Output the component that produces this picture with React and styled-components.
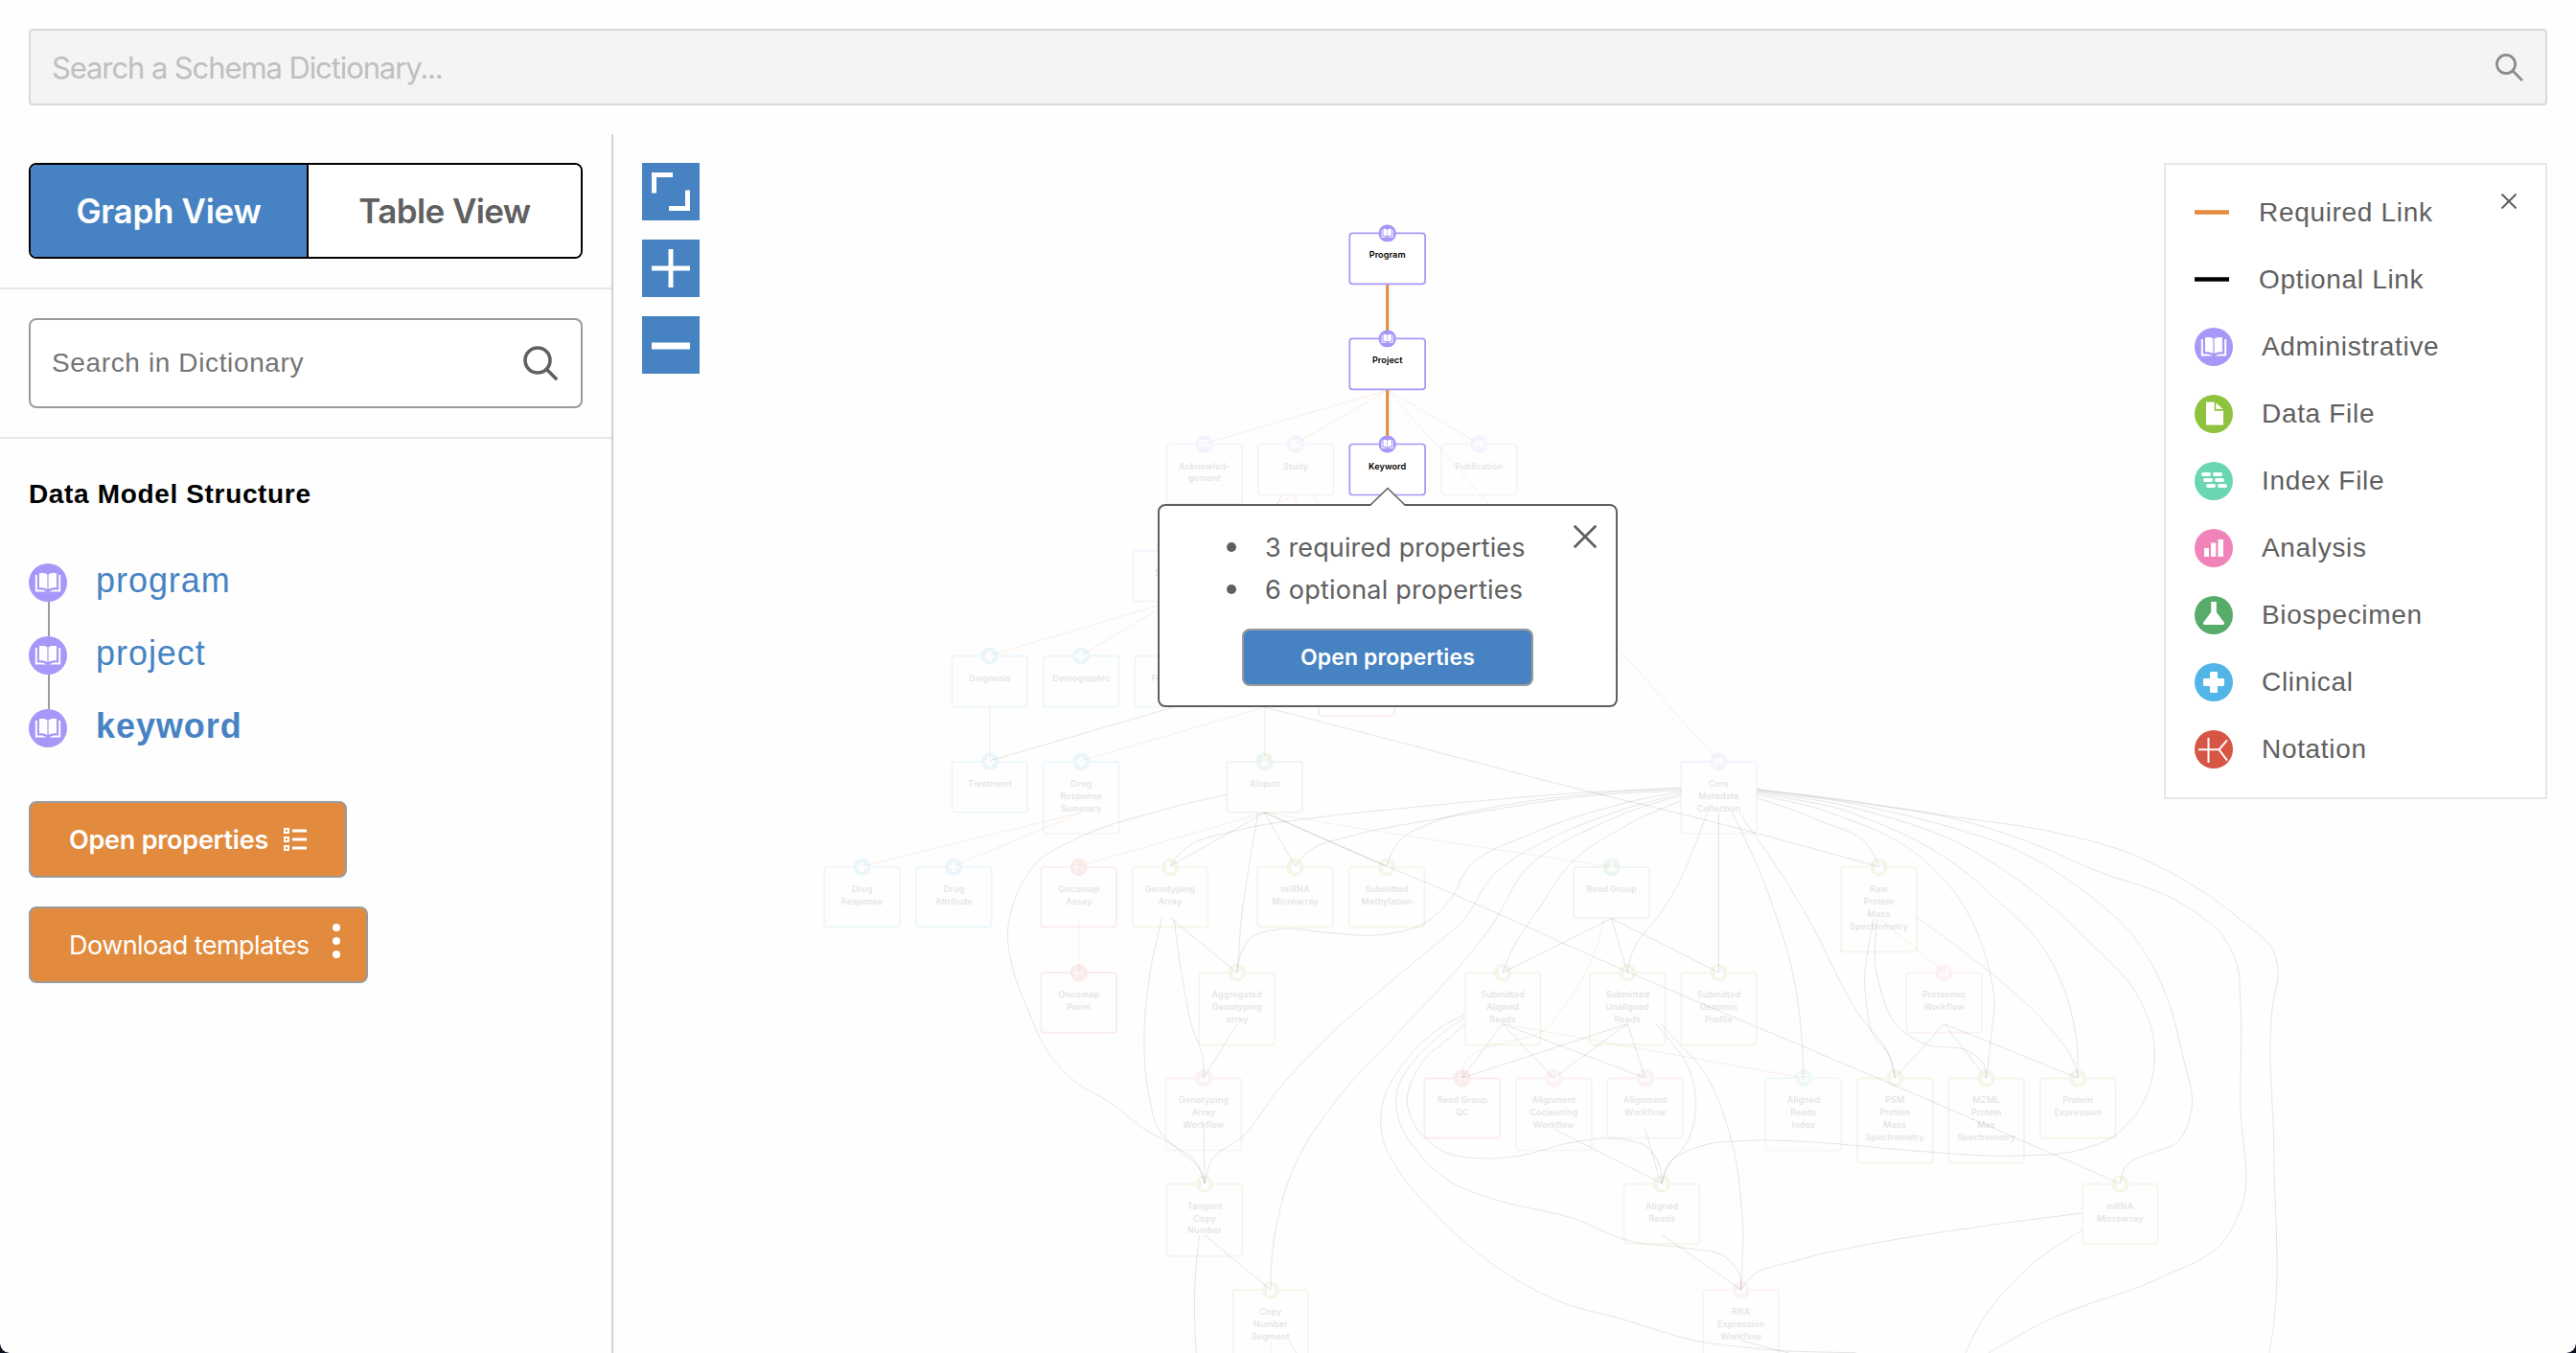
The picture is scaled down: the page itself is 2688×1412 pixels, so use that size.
import React from 'react';
import styled, { createGlobalStyle } from 'styled-components';

const sans = `Inter, Roboto, sans-serif`;
const helv = `"Liberation Sans", Arial, sans-serif`;

const Global = createGlobalStyle`
  *{box-sizing:border-box;}
  html,body{margin:0;padding:0;background:#fff;}
  body{width:2688px;height:1412px;overflow:hidden;}
  button{font:inherit;cursor:pointer;}
`;

const Page = styled.div`
  position:relative;display:flex;flex-direction:column;width:2688px;height:1412px;overflow:hidden;background:#fefefe;
`;
const TopBar = styled.header`padding:30px;height:140px;`;
const SchemaSearch = styled.div`
  display:flex;align-items:center;justify-content:space-between;height:80px;padding:0 23px 0 22px;
  border:2px solid #d9d9d9;border-radius:4px;background:#f4f4f4;
`;
const Hint = styled.span`
  font-family:${(p) => p.$font};font-size:${(p) => p.$size}px;letter-spacing:${(p) => p.$track}px;color:${(p) => p.$color};white-space:nowrap;
`;
const Main = styled.div`display:flex;height:1272px;`;
const Side = styled.aside`width:640px;border-right:2px solid #d1d1d1;`;
const Section = styled.section`
  padding:30px;border-bottom:2px solid #e7e7e7;height:${(p) => p.$h}px;
`;
const Toggle = styled.div`
  display:flex;width:578px;height:100px;border:2px solid #000;border-radius:8px;overflow:hidden;
`;
const ToggleItem = styled.button`
  width:${(p) => (p.$active ? 290 : 284)}px;border:0;border-right:${(p) => (p.$active ? '2px solid #000' : '0')};padding:0;
  background:${(p) => (p.$active ? '#4783c3' : '#fff')};color:${(p) => (p.$active ? '#fff' : '#606060')};
  font-family:${sans};font-weight:600;font-size:35px;letter-spacing:${(p) => p.$track}px;
`;
const DictSearch = styled.div`
  display:flex;align-items:center;justify-content:space-between;width:578px;height:94px;
  padding:0 24px 0 22px;border:2px solid #9b9b9b;border-radius:8px;background:#fff;
`;
const Structure = styled.div`padding:42px 30px 0;`;
const Heading = styled.h3`margin:0;height:32px;line-height:32px;font-family:${helv};font-weight:700;font-size:28px;letter-spacing:0.65px;color:#000;`;
const Steps = styled.ul`list-style:none;margin:56px 0 0;padding:0;display:flex;flex-direction:column;`;
const Step = styled.li`display:flex;height:76px;&:last-child{height:40px;}`;
const Rail = styled.div`width:40px;display:flex;flex-direction:column;align-items:center;`;
const Joint = styled.div`width:2px;height:36px;margin-left:2px;background:#9b9b9b;`;
const StepName = styled.span`
  margin-left:30px;height:40px;line-height:40px;margin-top:-2px;font-family:${helv};font-size:36px;color:#4783c3;
  font-weight:${(p) => (p.$current ? 700 : 400)};letter-spacing:${(p) => p.$track}px;
`;
const Actions = styled.div`display:flex;flex-direction:column;align-items:flex-start;gap:30px;margin-top:56px;`;
const ActionButton = styled.button`
  display:flex;align-items:center;width:${(p) => p.$w}px;height:80px;padding:0 0 0 40px;border:2px solid #9b9b9b;border-radius:8px;
  background:#e28a3d;color:#fff;font-family:${sans};font-size:27px;font-weight:${(p) => p.$weight};letter-spacing:${(p) => p.$track}px;white-space:nowrap;
  svg{margin-left:${(p) => p.$gap}px;}
`;
const Canvas = styled.main`position:relative;width:2048px;height:1272px;overflow:hidden;padding:30px;`;
const Graph = styled.svg`position:absolute;inset:0;display:block;`;
const NodeText = styled.text`font-family:${sans};font-size:9.1px;font-weight:600;letter-spacing:0.08px;text-anchor:middle;fill:#000;`;
const Controls = styled.div`position:relative;display:flex;flex-direction:column;gap:20px;width:60px;`;
const ControlButton = styled.button`width:60px;height:60px;padding:0;border:0;background:#4783c3;display:block;svg{display:block;}`;

const Legend = styled.div`
  position:absolute;top:30px;right:30px;width:400px;height:664px;padding:15px 30px;border:2px solid #e7e7e7;background:#fff;
`;
const LegendRow = styled.div`
  display:flex;align-items:center;height:70px;font-family:${helv};font-size:28px;color:#606060;
  svg{flex:none;margin-right:${(p) => p.$gap}px;}
`;
const LegendLabel = styled.span`letter-spacing:0.68px;white-space:nowrap;`;
const LegendClose = styled.svg`position:absolute;right:30px;top:30px;`;

const Popup = styled.div`
  position:absolute;left:568px;top:386px;width:480px;height:212px;padding:21px 0 0;border:2px solid #606060;border-radius:8px;background:#fff;
  display:flex;flex-direction:column;align-items:center;
`;
const Arrow = styled.svg`position:absolute;left:219px;top:-21px;`;
const PopupClose = styled.svg`position:absolute;left:431px;top:19px;`;
const Facts = styled.ul`list-style:none;margin:0;padding:0;width:346px;`;
const Fact = styled.li`
  display:flex;align-items:center;height:44px;font-family:${sans};font-size:27px;color:#606060;letter-spacing:${(p) => p.$track}px;white-space:nowrap;
`;
const Bullet = styled.span`width:10px;height:10px;border-radius:50%;background:#606060;margin:0 30px 0 5px;`;
const PopupButton = styled.button`
  width:304px;height:60px;margin-top:19px;padding:0;border:2px solid #9b9b9b;border-radius:8px;background:#4783c3;color:#fff;
  font-family:${sans};font-weight:600;font-size:23px;letter-spacing:0.1px;
`;
const Corner = styled.svg`position:absolute;bottom:0;${(p) => p.$side}:0;${(p) => (p.$side === 'right' ? 'transform:scaleX(-1);' : '')}`;

const COLORS = {
  administrative: '#a797f8', data: '#8fc33d', index: '#6ad6b4', analysis: '#f183bb',
  biospecimen: '#58ac6a', clinical: '#52b5e7', notation: '#d65544',
};

const glyphs = {
  administrative: (
    <>
      <path d="M11 10.300c3-.5 6-.2 8.400 1.200v15.300c-2.400-1.400-5.400-1.800-8.400-1.600z" fill="#fff" />
      <path d="M29 10.300c-3-.5-6-.2-8.400 1.200v15.300c2.400-1.400 5.400-1.800 8.400-1.600z" fill="#fff" />
      <path d="M6.800 12h2v15.600c3.600-.5 7-.2 10.200 2H6.800zM33.200 12h-2v15.600c-3.600-.5-7-.2-10.200 2h12.200z" fill="#fff" />
    </>
  ),
  data: <path d="M12 7.500h8.700v9.200H30v14.800H12zM22.300 8.200l7.200 6.900h-7.200z" fill="#fff" />,
  index: (
    <path d="M9 13h6M21 13h6M11 19h6M23 19h6M14 25h6M26 25h6" stroke="#fff" strokeWidth="4" strokeLinecap="round" />
  ),
  analysis: <path d="M10 20h5v9h-5zM17 14.500h5.300V29H17zM24.500 11H30v18h-5.500z" fill="#fff" />,
  biospecimen: <path d="M17.200 6h5.600v11l8 10.500c.7 1.300.2 2.500-1.400 2.500H10.600c-1.600 0-2.100-1.200-1.400-2.500l8-10.500z" fill="#fff" />,
  clinical: (
    <>
      <rect x="16" y="9" width="8" height="22" rx="1.300" fill="#fff" />
      <rect x="9" y="16" width="22" height="8" rx="1.300" fill="#fff" />
    </>
  ),
  notation: <path d="M4 20.300h21.500M14.500 8v26M34 10.300L25.500 20.300L34 31.700" stroke="#fff" strokeWidth="2" fill="none" />,
};

const Badge = ({ kind, size = 40, x, y }) => (
  <svg width={size} height={size} x={x} y={y} viewBox="0 0 40 40" fill="none">
    <circle cx="20" cy="20" r="20" fill={COLORS[kind]} />
    {glyphs[kind]}
  </svg>
);

const ROWS = [243.4, 353.4, 463.5, 574.6, 684.6, 794.8, 905, 1015.2, 1125.3, 1235.6, 1346.2];
const HEIGHTS = { 1: 53, 2: 62.4, 3: 75.2, 4: 88.4 };

const NODES = [
  [1256.8, 2, 'administrative', ['Acknowled-', 'gement']],
  [1352.2, 2, 'administrative', ['Study']],
  [1543.3, 2, 'administrative', ['Publication']],
  [1222, 3, 'administrative', ['Subject']],
  [1032.8, 4, 'clinical', ['Diagnosis']],
  [1128.2, 4, 'clinical', ['Demographic']],
  [1224, 4, 'clinical', ['Follow-up']],
  [1319.6, 4, 'biospecimen', ['Sample']],
  [1415.7, 4, 'notation', ['', '']],
  [1032.8, 5, 'clinical', ['Treatment']],
  [1128.2, 5, 'clinical', ['Drug', 'Response', 'Summary']],
  [1319.6, 5, 'biospecimen', ['Aliquot']],
  [1793.5, 5, 'administrative', ['Core', 'Metadata', 'Collection']],
  [899.6, 6, 'clinical', ['Drug', 'Response']],
  [995.3, 6, 'clinical', ['Drug', 'Attribute']],
  [1125.7, 6, 'notation', ['Oncomap', 'Assay']],
  [1221, 6, 'data', ['Genotyping', 'Array']],
  [1351.4, 6, 'data', ['miRNA', 'Microarray']],
  [1447, 6, 'data', ['Submitted', 'Methylation']],
  [1681.6, 6, 'biospecimen', ['Read Group']],
  [1960.5, 6, 'data', ['Raw', 'Protein', 'Mass', 'Spectrometry']],
  [1125.7, 7, 'notation', ['Oncomap', 'Panel']],
  [1290.8, 7, 'data', ['Aggregated', 'Genotyping', 'array']],
  [1568, 7, 'data', ['Submitted', 'Aligned', 'Reads']],
  [1698.2, 7, 'data', ['Submitted', 'Unaligned', 'Reads']],
  [1793.5, 7, 'data', ['Submitted', 'Genomic', 'Profile']],
  [2028.6, 7, 'analysis', ['Proteomic', 'Workflow']],
  [1256, 8, 'analysis', ['Genotyping', 'Array', 'Workflow']],
  [1525.8, 8, 'notation', ['Read Group', 'QC']],
  [1621.3, 8, 'analysis', ['Alignment', 'Cocleaning', 'Workflow']],
  [1716.7, 8, 'analysis', ['Alignment', 'Workflow']],
  [1881.8, 8, 'index', ['Aligned', 'Reads', 'Index']],
  [1977.3, 8, 'data', ['PSM', 'Protein', 'Mass', 'Spectrometry']],
  [2072.6, 8, 'data', ['MZML', 'Protein', 'Mas', 'Spectrometry']],
  [2168.2, 8, 'data', ['Protein', 'Expression']],
  [1257, 9, 'data', ['Tangent', 'Copy', 'Number']],
  [1734, 9, 'data', ['Aligned', 'Reads']],
  [2212.3, 9, 'data', ['mRNA', 'Microarray']],
  [1325.8, 10, 'data', ['Copy', 'Number', 'Segment']],
  [1816.7, 10, 'analysis', ['RNA', 'Expression', 'Workflow']],
];

const ACTIVE = [
  [1447.7, 0, 'administrative', ['Program']],
  [1447.7, 1, 'administrative', ['Project']],
  [1447.7, 2, 'administrative', ['Keyword']],
];

const REQUIRED = [
  [1447.8, 407, 1256.8, 463], [1447.8, 407, 1352.2, 463], [1447.8, 407, 1543.3, 463],
  [1447.8, 407, 1553.6, 525.7, 1688, 676.5, 1744.5, 740, 1793.5, 794],
  [1352, 517, 1222, 574], [1352, 517, 1352, 560], [1371, 517, 1390, 549],
  [1222, 628, 1032.8, 684], [1222, 628, 1128.2, 684],
  [1032.8, 738, 1032.8, 794], [1319.6, 738, 1128.2, 794], [1319.6, 738, 1319.6, 794],
  [1128.2, 848, 899.6, 904], [1128.2, 848, 995.3, 904],
  [1319.6, 848, 1125.7, 904], [1319.6, 848, 1480, 874, 1681.6, 904.5],
  [1125.7, 958, 1125.7, 1014],
  [1674, 958, 1661.4, 1000, 1630, 1053, 1610, 1076, 1574.5, 1087, 1546.7, 1095, 1530, 1107, 1526, 1125],
  [1568, 1068.5, 1881.8, 1125], [1960.5, 958, 2028.6, 1014], [1325.8, 1400, 1325.8, 1412],
];

const OPTIONAL = [
  [1337.7, 517, 1327, 536],
  [1224.5, 738, 1032.8, 794],
  [1319.6, 738, 1480, 779.6, 1657.5, 826, 1744.5, 847, 1960.5, 904.5],
  [1319.6, 848, 1221, 904], [1319.6, 848, 1351.4, 904], [1319.6, 848, 1447, 904],
  [1319.6, 848, 1440, 901, 1514, 932, 1698, 1014, 1853, 1080, 1976.7, 1132.7, 2040, 1160, 2212, 1235],
  [1312.7, 848, 1301, 918.6, 1295, 961, 1292, 1004, 1290.8, 1015],
  [1279.6, 829.3, 1207, 847, 1125.7, 874, 1081, 901, 1060, 936, 1051.4, 974, 1056, 1008, 1072.7, 1054, 1095, 1100, 1122, 1129, 1160, 1151.7, 1193, 1177.7, 1226.7, 1196.7, 1246.7, 1211.7, 1257, 1235],
  [1754, 822, 1600, 831, 1480, 842, 1370.6, 853.6, 1289, 867, 1236, 886, 1221, 904],
  [1754, 825, 1637.7, 833, 1539, 848.3, 1480, 858, 1411, 872, 1366.5, 888, 1351.4, 904],
  [1754, 823.3, 1657.5, 829, 1558.6, 842.3, 1499, 856.7, 1460, 878, 1446.7, 904.3],
  [1754, 826, 1677, 843, 1598, 870, 1531, 906.7, 1515, 936.7, 1487.4, 963, 1440, 975.7, 1383, 973, 1336, 969.6, 1305, 979, 1293, 1001, 1290.8, 1015],
  [1754, 828, 1677, 850.7, 1614, 876.7, 1558.6, 913, 1527, 960, 1483, 998, 1440, 1034, 1387.7, 1080, 1333, 1138, 1296.7, 1186, 1266.7, 1208, 1257, 1235],
  [1754, 830, 1677, 856.7, 1590, 910, 1558.6, 963, 1499, 1035, 1456.7, 1080, 1393, 1150, 1353, 1211.7, 1333, 1273, 1326.7, 1320, 1325.8, 1346],
  [1754, 835.7, 1697, 861.7, 1641.7, 898.3, 1606, 948, 1578.4, 990, 1568, 1015],
  [1781.6, 848, 1732.6, 953, 1705, 990, 1698, 1015],
  [1793.5, 848, 1793.5, 1015],
  [1807.7, 848, 1847, 938, 1871, 1016.7, 1880.6, 1090, 1881.7, 1125],
  [1814.8, 848, 1883, 951.7, 1942, 1062, 1970, 1099, 1977.3, 1125],
  [1833.4, 832.7, 1894.7, 855, 1950, 883, 1960.5, 904.5],
  [1833.4, 829.3, 1914.5, 850, 1993.6, 886.7, 2040, 932, 2060, 965.4, 2076, 1013.8, 2081.3, 1046, 2078.3, 1076, 2072.7, 1125],
  [1833.4, 827.3, 1954, 856.7, 2040, 901.7, 2090, 945, 2126.7, 981.5, 2153, 1030, 2165, 1074, 2168.2, 1125],
  [1833.4, 826, 1954, 848.3, 2040, 878, 2106.7, 919, 2183, 985.6, 2230, 1038, 2248, 1090, 2240, 1142.8, 2206.7, 1185, 2166.7, 1201, 2106.7, 1206, 1993, 1200.7, 1893, 1192, 1826.7, 1190.3, 1773, 1196.7, 1743, 1213, 1734, 1235],
  [1833.4, 825, 1954, 843, 2040, 864.6, 2106.7, 888, 2173, 929, 2226.7, 977.5, 2260, 1038, 2276.7, 1098, 2286.7, 1159, 2273, 1191, 2240, 1205, 2220, 1215, 2212.3, 1235],
  [1833.4, 824, 1940, 838, 2040, 854.6, 2123, 880.8, 2183, 907, 2280, 945, 2320, 977.5, 2335, 1009.7, 2337.7, 1042, 2337.7, 1150, 2337.7, 1263.7, 2320, 1296, 2253, 1334, 2140, 1376.5, 2075, 1412],
  [1833.4, 823.5, 1940, 837, 2040, 852.5, 2140, 867.9, 2223, 890.8, 2273, 915, 2340, 961.4, 2373, 993.6, 2377.3, 1017.8, 2372.7, 1042, 2372.7, 1200, 2372.7, 1380.6, 2368, 1412],
  [1221, 958, 1290.8, 1015],
  [1212.7, 958, 1199, 1022, 1194, 1078, 1198.3, 1140, 1210, 1180, 1233, 1203, 1251.7, 1220, 1257, 1235],
  [1225, 958, 1234, 1022, 1244, 1072, 1255, 1103, 1256, 1125],
  [1290.8, 1068.6, 1256, 1125],
  [1681.6, 958.5, 1568, 1015], [1681.6, 958.5, 1698.2, 1015], [1681.6, 958.5, 1793.5, 1015],
  [1568, 1068.5, 1525.8, 1125], [1568, 1068.5, 1621, 1125], [1568, 1068.5, 1716.7, 1125],
  [1528, 1059, 1493, 1080, 1463, 1111.7, 1443, 1150, 1441.7, 1183, 1460, 1223, 1493, 1261.7, 1560, 1321, 1626.7, 1358, 1693, 1376.7, 1773, 1400, 1826.7, 1406.7, 1936.7, 1411.7],
  [1528, 1062, 1503, 1080, 1473, 1110, 1457.3, 1140, 1460, 1170, 1480, 1203, 1513, 1233, 1560, 1251.7, 1643, 1272, 1700, 1295, 1760, 1302.7, 1800, 1311.7, 1815, 1330, 1816.7, 1346],
  [1529.8, 1068, 1516, 1080, 1483, 1110, 1468.3, 1150, 1480, 1180, 1506.7, 1201.7, 1550, 1209, 1586.7, 1206, 1643, 1191.7, 1693, 1189, 1720, 1198, 1731.7, 1216.7, 1734, 1235],
  [1698.2, 1068.5, 1525.8, 1125], [1698.2, 1068.5, 1621, 1125], [1698.2, 1068.5, 1716.7, 1125],
  [1727.5, 1068, 1737.7, 1080, 1763, 1116.7, 1769.3, 1153, 1760, 1193, 1741.7, 1215, 1734, 1235],
  [1732.6, 1068, 1743, 1080, 1776.7, 1116.7, 1806.7, 1190, 1816.7, 1253, 1816.7, 1346],
  [1955.2, 958, 1948, 1050, 1954, 1079, 1971.7, 1101.7, 1977.3, 1125],
  [1958.8, 958, 1960, 1023, 1981.7, 1073, 2010, 1090, 2053, 1096.7, 2068, 1108, 2072.6, 1125],
  [2000, 957, 2040, 986.4, 2090, 1025.9, 2140, 1074, 2163, 1106.5, 2168.2, 1125],
  [2028.6, 1068.5, 1977.3, 1125], [2028.6, 1068.5, 2072.6, 1125], [2028.6, 1068.5, 2168.2, 1125],
  [1256, 1178, 1257, 1235], [1621.3, 1178, 1734, 1235], [1716.7, 1178, 1733, 1235], [1734, 1288.5, 1816.7, 1346],
  [2172.7, 1266, 2060, 1281, 1960, 1296.7, 1876.7, 1315, 1826.7, 1333, 1816.7, 1346],
  [2172.7, 1283.8, 2106.7, 1332, 2066.7, 1380.6, 2051, 1412],
  [1251.7, 1289, 1247.3, 1333, 1246.7, 1380, 1248.3, 1412],
  [1257, 1289, 1325.8, 1346], [1345.7, 1400, 1353, 1412], [1816.7, 1399, 1866.7, 1412],
];

// Smooth path through every point, with tangents weighted by segment length.
const smooth = (flat) => {
  const p = [];
  for (let i = 0; i < flat.length; i += 2) p.push([flat[i], flat[i + 1]]);
  if (p.length === 2) return `M${p[0]}L${p[1]}`;
  const dist = (a, b) => Math.hypot(a[0] - b[0], a[1] - b[1]) || 1;
  const tan = p.map((q, i) => {
    if (i === 0 || i === p.length - 1) return null;
    const d1 = dist(p[i - 1], q);
    const d2 = dist(q, p[i + 1]);
    return [0, 1].map((k) => ((q[k] - p[i - 1][k]) / d1) * (d2 / (d1 + d2)) + ((p[i + 1][k] - q[k]) / d2) * (d1 / (d1 + d2)));
  });
  let d = `M${p[0]}`;
  for (let i = 0; i < p.length - 1; i += 1) {
    const a = p[i];
    const b = p[i + 1];
    const l = dist(a, b) / 3;
    const c1 = tan[i] ? [a[0] + tan[i][0] * l, a[1] + tan[i][1] * l] : null;
    const c2 = tan[i + 1] ? [b[0] - tan[i + 1][0] * l, b[1] - tan[i + 1][1] * l] : null;
    d += `C${(c1 || c2).map((n) => n.toFixed(1))} ${(c2 || c1).map((n) => n.toFixed(1))} ${b}`;
  }
  return d;
};

const GraphNode = ({ node: [x, row, kind, lines] }) => {
  const y = ROWS[row];
  return (
    <g>
      <rect x={x - 39.4} y={y} width="78.8" height={HEIGHTS[lines.length]} rx="3.2" fill="#fff" stroke={COLORS[kind]} strokeWidth="1.7" />
      {lines.map((t, i) => (
        <NodeText key={i} x={x} y={y + 26 + i * 12.9}>{t}</NodeText>
      ))}
      <Badge kind={kind} size={18.4} x={x - 9.2} y={y - 9.2} />
    </g>
  );
};

const TopMagnifier = () => (
  <svg width="29" height="29" viewBox="0 0 29 29" fill="none" stroke="#8a8a8a" strokeWidth="2.700">
    <circle cx="11" cy="11" r="9.600" />
    <path d="M17.800 17.800L28 28" />
  </svg>
);

const Magnifier = () => (
  <svg width="36" height="36" viewBox="0 0 36 36" fill="none" stroke="#606060" strokeWidth="3.600" strokeLinecap="round">
    <circle cx="15" cy="15" r="13" />
    <path d="M24.300 24.300L34 34" />
  </svg>
);

const TYPES = [
  ['administrative', 'Administrative'], ['data', 'Data File'], ['index', 'Index File'], ['analysis', 'Analysis'],
  ['biospecimen', 'Biospecimen'], ['clinical', 'Clinical'], ['notation', 'Notation'],
];

export default function App() {
  return (
    <Page>
      <Global />
      <TopBar>
        <SchemaSearch>
          <Hint $font={sans} $size={31} $track={-1.1} $color="#bfbfbf">Search a Schema Dictionary...</Hint>
          <TopMagnifier />
        </SchemaSearch>
      </TopBar>
      <Main>
        <Side>
          <Section $h={162}>
            <Toggle>
              <ToggleItem $active $track={-0.3}>Graph View</ToggleItem>
              <ToggleItem $track={-0.6}>Table View</ToggleItem>
            </Toggle>
          </Section>
          <Section $h={156}>
            <DictSearch>
              <Hint $font={helv} $size={28} $track={0.63} $color="#757575">Search in Dictionary</Hint>
              <Magnifier />
            </DictSearch>
          </Section>
          <Structure>
            <Heading>Data Model Structure</Heading>
            <Steps>
              {['program', 'project', 'keyword'].map((name, i) => (
                <Step key={name}>
                  <Rail>
                    <Badge kind="administrative" />
                    {i < 2 && <Joint />}
                  </Rail>
                  <StepName $current={i === 2} $track={0.95}>{name}</StepName>
                </Step>
              ))}
            </Steps>
            <Actions>
              <ActionButton $w={332} $weight={600} $track={-0.25} $gap={16}>
                Open properties
                <svg width="24" height="24" viewBox="0 0 24 24" fill="none" stroke="#fff">
                  <path d="M1 1h4v4H1zM1 10h4v4H1zM1 19h4v4H1z" strokeWidth="2" />
                  <path d="M9 3h15M9 12h15M9 21h15" strokeWidth="3.200" />
                </svg>
              </ActionButton>
              <ActionButton $w={354} $weight={400} $track={-0.53} $gap={23}>
                Download templates
                <svg width="10" height="46" viewBox="0 0 10 46" fill="#fff">
                  <circle cx="5" cy="5" r="4" />
                  <circle cx="5" cy="19" r="4" />
                  <circle cx="5" cy="33" r="4" />
                </svg>
              </ActionButton>
            </Actions>
          </Structure>
        </Side>
        <Canvas>
          <Graph width="2048" height="1272" viewBox="640 140 2048 1272" fill="none">
            {REQUIRED.map((e, i) => <path key={i} d={smooth(e)} stroke="#e28a3d" strokeOpacity="0.14" strokeWidth="1" />)}
            {NODES.map((n, i) => <g key={i} opacity="0.1"><GraphNode node={n} /></g>)}
            {OPTIONAL.map((e, i) => <path key={i} d={smooth(e)} stroke="#000" strokeOpacity="0.1" strokeWidth="1" />)}
            <path d="M1447.700 297V353M1447.700 407V463" stroke="#e28a3d" strokeWidth="3" />
            {ACTIVE.map((n, i) => <GraphNode key={i} node={n} />)}
          </Graph>
          <Controls>
            <ControlButton aria-label="Fit">
              <svg width="60" height="60" fill="none" stroke="#fff" strokeWidth="5"><path d="M12.500 31.500V12.500H32M47.500 28.500V47.500H28" /></svg>
            </ControlButton>
            <ControlButton aria-label="Zoom in">
              <svg width="60" height="60" fill="none" stroke="#fff" strokeWidth="5"><path d="M30 10V50M10 30H50" /></svg>
            </ControlButton>
            <ControlButton aria-label="Zoom out">
              <svg width="60" height="60" fill="none" stroke="#fff" strokeWidth="7"><path d="M10 31H50" /></svg>
            </ControlButton>
          </Controls>
          <Popup>
            <Arrow width="38" height="22" viewBox="0 0 38 22">
              <path d="M0 22L19 2.500L38 22z" fill="#fff" />
              <path d="M1 20L19 2.500L37 20" fill="none" stroke="#606060" strokeWidth="1.600" />
            </Arrow>
            <PopupClose width="26" height="26" viewBox="0 0 26 26">
              <path d="M2.500 2.500l21 21M23.500 2.500l-21 21" stroke="#606060" strokeWidth="2.800" strokeLinecap="round" />
            </PopupClose>
            <Facts>
              <Fact $track={0.12}><Bullet />3 required properties</Fact>
              <Fact $track={0.22}><Bullet />6 optional properties</Fact>
            </Facts>
            <PopupButton>Open properties</PopupButton>
          </Popup>
          <Legend>
            <LegendRow $gap={31}>
              <svg width="36" height="10"><path d="M0 4.500H36" stroke="#e28a3d" strokeWidth="4.500" /></svg>
              <LegendLabel>Required Link</LegendLabel>
            </LegendRow>
            <LegendRow $gap={31}>
              <svg width="36" height="10"><path d="M0 4.500H36" stroke="#000" strokeWidth="4.500" /></svg>
              <LegendLabel>Optional Link</LegendLabel>
            </LegendRow>
            {TYPES.map(([kind, label]) => (
              <LegendRow key={kind} $gap={30}>
                <Badge kind={kind} />
                <LegendLabel>{label}</LegendLabel>
              </LegendRow>
            ))}
            <LegendClose width="16" height="16" viewBox="0 0 16 16">
              <path d="M.5 .5l15 15M15.500 .5l-15 15" stroke="#606060" strokeWidth="2" />
            </LegendClose>
          </Legend>
        </Canvas>
      </Main>
      <Corner $side="left" width="10" height="10"><path d="M0 0Q1 9 10 10H0z" fill="#0a1420" /></Corner>
      <Corner $side="right" width="10" height="10"><path d="M0 0Q1 9 10 10H0z" fill="#0a1420" /></Corner>
    </Page>
  );
}
